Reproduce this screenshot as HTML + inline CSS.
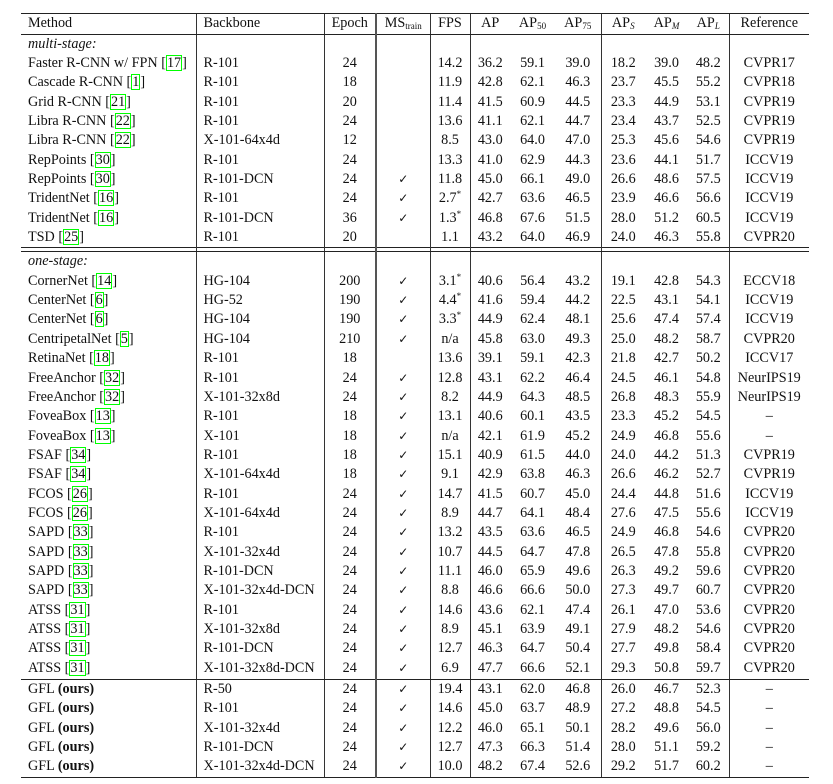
<!DOCTYPE html>
<html><head><meta charset="utf-8"><style>
html,body{margin:0;padding:0;background:#fff;width:833px;height:784px;overflow:hidden}
table{position:absolute;left:21px;top:12.5px;border-collapse:collapse;table-layout:fixed;font-family:"Liberation Serif",serif;font-size:14.2px;color:#111}
td{padding:0;white-space:nowrap;text-align:center;border-left:1px solid #333;line-height:19px;overflow:visible}
td:first-child{border-left:none;text-align:left;padding-left:7px}
td:nth-child(2){text-align:left;padding-left:7px}
td:nth-child(4){border-left:2px solid #555}
td:nth-child(7),td:nth-child(8),td:nth-child(10),td:nth-child(11){border-left:none}
tr.r td{height:19.35px}
tr.h td{height:20px;border-top:1.5px solid #222;border-bottom:1px solid #222}
tr.s td{height:3px;border-top:1px solid #222;border-bottom:1px solid #222}
tr.t td{height:1px;border-bottom:1px solid #222}
tr.last td{border-bottom:1.5px solid #222}
.c{outline:1.5px solid #0f0;outline-offset:-1px;padding:0 1px}
sub{font-size:9px;vertical-align:-2px;line-height:0}
sup{font-size:9px;vertical-align:5px;line-height:0}
b{font-weight:bold}
.k{font-family:"DejaVu Sans",sans-serif;font-size:12px}
</style></head><body>
<table>
<colgroup><col style="width:175px"><col style="width:128px"><col style="width:52px"><col style="width:54px"><col style="width:40px"><col style="width:40px"><col style="width:45px"><col style="width:46px"><col style="width:44px"><col style="width:43px"><col style="width:41px"><col style="width:80px"></colgroup>
<tr class="h"><td>Method</td><td>Backbone</td><td>Epoch</td><td>MS<sub>train</sub></td><td>FPS</td><td>AP</td><td>AP<sub>50</sub></td><td>AP<sub>75</sub></td><td>AP<sub><i>S</i></sub></td><td>AP<sub><i>M</i></sub></td><td>AP<sub><i>L</i></sub></td><td>Reference</td></tr>
<tr class="r"><td><i>multi-stage:</i></td><td></td><td></td><td></td><td></td><td></td><td></td><td></td><td></td><td></td><td></td><td></td></tr>
<tr class="r"><td>Faster R-CNN w/ FPN [<span class="c">17</span>]</td><td>R-101</td><td>24</td><td></td><td>14.2</td><td>36.2</td><td>59.1</td><td>39.0</td><td>18.2</td><td>39.0</td><td>48.2</td><td>CVPR17</td></tr>
<tr class="r"><td>Cascade R-CNN [<span class="c">1</span>]</td><td>R-101</td><td>18</td><td></td><td>11.9</td><td>42.8</td><td>62.1</td><td>46.3</td><td>23.7</td><td>45.5</td><td>55.2</td><td>CVPR18</td></tr>
<tr class="r"><td>Grid R-CNN [<span class="c">21</span>]</td><td>R-101</td><td>20</td><td></td><td>11.4</td><td>41.5</td><td>60.9</td><td>44.5</td><td>23.3</td><td>44.9</td><td>53.1</td><td>CVPR19</td></tr>
<tr class="r"><td>Libra R-CNN [<span class="c">22</span>]</td><td>R-101</td><td>24</td><td></td><td>13.6</td><td>41.1</td><td>62.1</td><td>44.7</td><td>23.4</td><td>43.7</td><td>52.5</td><td>CVPR19</td></tr>
<tr class="r"><td>Libra R-CNN [<span class="c">22</span>]</td><td>X-101-64x4d</td><td>12</td><td></td><td>8.5</td><td>43.0</td><td>64.0</td><td>47.0</td><td>25.3</td><td>45.6</td><td>54.6</td><td>CVPR19</td></tr>
<tr class="r"><td>RepPoints [<span class="c">30</span>]</td><td>R-101</td><td>24</td><td></td><td>13.3</td><td>41.0</td><td>62.9</td><td>44.3</td><td>23.6</td><td>44.1</td><td>51.7</td><td>ICCV19</td></tr>
<tr class="r"><td>RepPoints [<span class="c">30</span>]</td><td>R-101-DCN</td><td>24</td><td class="k">✓</td><td>11.8</td><td>45.0</td><td>66.1</td><td>49.0</td><td>26.6</td><td>48.6</td><td>57.5</td><td>ICCV19</td></tr>
<tr class="r"><td>TridentNet [<span class="c">16</span>]</td><td>R-101</td><td>24</td><td class="k">✓</td><td>2.7<sup>*</sup></td><td>42.7</td><td>63.6</td><td>46.5</td><td>23.9</td><td>46.6</td><td>56.6</td><td>ICCV19</td></tr>
<tr class="r"><td>TridentNet [<span class="c">16</span>]</td><td>R-101-DCN</td><td>36</td><td class="k">✓</td><td>1.3<sup>*</sup></td><td>46.8</td><td>67.6</td><td>51.5</td><td>28.0</td><td>51.2</td><td>60.5</td><td>ICCV19</td></tr>
<tr class="r"><td>TSD [<span class="c">25</span>]</td><td>R-101</td><td>20</td><td></td><td>1.1</td><td>43.2</td><td>64.0</td><td>46.9</td><td>24.0</td><td>46.3</td><td>55.8</td><td>CVPR20</td></tr>
<tr class="s"><td></td><td></td><td></td><td></td><td></td><td></td><td></td><td></td><td></td><td></td><td></td><td></td></tr>
<tr class="r"><td><i>one-stage:</i></td><td></td><td></td><td></td><td></td><td></td><td></td><td></td><td></td><td></td><td></td><td></td></tr>
<tr class="r"><td>CornerNet [<span class="c">14</span>]</td><td>HG-104</td><td>200</td><td class="k">✓</td><td>3.1<sup>*</sup></td><td>40.6</td><td>56.4</td><td>43.2</td><td>19.1</td><td>42.8</td><td>54.3</td><td>ECCV18</td></tr>
<tr class="r"><td>CenterNet [<span class="c">6</span>]</td><td>HG-52</td><td>190</td><td class="k">✓</td><td>4.4<sup>*</sup></td><td>41.6</td><td>59.4</td><td>44.2</td><td>22.5</td><td>43.1</td><td>54.1</td><td>ICCV19</td></tr>
<tr class="r"><td>CenterNet [<span class="c">6</span>]</td><td>HG-104</td><td>190</td><td class="k">✓</td><td>3.3<sup>*</sup></td><td>44.9</td><td>62.4</td><td>48.1</td><td>25.6</td><td>47.4</td><td>57.4</td><td>ICCV19</td></tr>
<tr class="r"><td>CentripetalNet [<span class="c">5</span>]</td><td>HG-104</td><td>210</td><td class="k">✓</td><td>n/a</td><td>45.8</td><td>63.0</td><td>49.3</td><td>25.0</td><td>48.2</td><td>58.7</td><td>CVPR20</td></tr>
<tr class="r"><td>RetinaNet [<span class="c">18</span>]</td><td>R-101</td><td>18</td><td></td><td>13.6</td><td>39.1</td><td>59.1</td><td>42.3</td><td>21.8</td><td>42.7</td><td>50.2</td><td>ICCV17</td></tr>
<tr class="r"><td>FreeAnchor [<span class="c">32</span>]</td><td>R-101</td><td>24</td><td class="k">✓</td><td>12.8</td><td>43.1</td><td>62.2</td><td>46.4</td><td>24.5</td><td>46.1</td><td>54.8</td><td>NeurIPS19</td></tr>
<tr class="r"><td>FreeAnchor [<span class="c">32</span>]</td><td>X-101-32x8d</td><td>24</td><td class="k">✓</td><td>8.2</td><td>44.9</td><td>64.3</td><td>48.5</td><td>26.8</td><td>48.3</td><td>55.9</td><td>NeurIPS19</td></tr>
<tr class="r"><td>FoveaBox [<span class="c">13</span>]</td><td>R-101</td><td>18</td><td class="k">✓</td><td>13.1</td><td>40.6</td><td>60.1</td><td>43.5</td><td>23.3</td><td>45.2</td><td>54.5</td><td>–</td></tr>
<tr class="r"><td>FoveaBox [<span class="c">13</span>]</td><td>X-101</td><td>18</td><td class="k">✓</td><td>n/a</td><td>42.1</td><td>61.9</td><td>45.2</td><td>24.9</td><td>46.8</td><td>55.6</td><td>–</td></tr>
<tr class="r"><td>FSAF [<span class="c">34</span>]</td><td>R-101</td><td>18</td><td class="k">✓</td><td>15.1</td><td>40.9</td><td>61.5</td><td>44.0</td><td>24.0</td><td>44.2</td><td>51.3</td><td>CVPR19</td></tr>
<tr class="r"><td>FSAF [<span class="c">34</span>]</td><td>X-101-64x4d</td><td>18</td><td class="k">✓</td><td>9.1</td><td>42.9</td><td>63.8</td><td>46.3</td><td>26.6</td><td>46.2</td><td>52.7</td><td>CVPR19</td></tr>
<tr class="r"><td>FCOS [<span class="c">26</span>]</td><td>R-101</td><td>24</td><td class="k">✓</td><td>14.7</td><td>41.5</td><td>60.7</td><td>45.0</td><td>24.4</td><td>44.8</td><td>51.6</td><td>ICCV19</td></tr>
<tr class="r"><td>FCOS [<span class="c">26</span>]</td><td>X-101-64x4d</td><td>24</td><td class="k">✓</td><td>8.9</td><td>44.7</td><td>64.1</td><td>48.4</td><td>27.6</td><td>47.5</td><td>55.6</td><td>ICCV19</td></tr>
<tr class="r"><td>SAPD [<span class="c">33</span>]</td><td>R-101</td><td>24</td><td class="k">✓</td><td>13.2</td><td>43.5</td><td>63.6</td><td>46.5</td><td>24.9</td><td>46.8</td><td>54.6</td><td>CVPR20</td></tr>
<tr class="r"><td>SAPD [<span class="c">33</span>]</td><td>X-101-32x4d</td><td>24</td><td class="k">✓</td><td>10.7</td><td>44.5</td><td>64.7</td><td>47.8</td><td>26.5</td><td>47.8</td><td>55.8</td><td>CVPR20</td></tr>
<tr class="r"><td>SAPD [<span class="c">33</span>]</td><td>R-101-DCN</td><td>24</td><td class="k">✓</td><td>11.1</td><td>46.0</td><td>65.9</td><td>49.6</td><td>26.3</td><td>49.2</td><td>59.6</td><td>CVPR20</td></tr>
<tr class="r"><td>SAPD [<span class="c">33</span>]</td><td>X-101-32x4d-DCN</td><td>24</td><td class="k">✓</td><td>8.8</td><td>46.6</td><td>66.6</td><td>50.0</td><td>27.3</td><td>49.7</td><td>60.7</td><td>CVPR20</td></tr>
<tr class="r"><td>ATSS [<span class="c">31</span>]</td><td>R-101</td><td>24</td><td class="k">✓</td><td>14.6</td><td>43.6</td><td>62.1</td><td>47.4</td><td>26.1</td><td>47.0</td><td>53.6</td><td>CVPR20</td></tr>
<tr class="r"><td>ATSS [<span class="c">31</span>]</td><td>X-101-32x8d</td><td>24</td><td class="k">✓</td><td>8.9</td><td>45.1</td><td>63.9</td><td>49.1</td><td>27.9</td><td>48.2</td><td>54.6</td><td>CVPR20</td></tr>
<tr class="r"><td>ATSS [<span class="c">31</span>]</td><td>R-101-DCN</td><td>24</td><td class="k">✓</td><td>12.7</td><td>46.3</td><td>64.7</td><td>50.4</td><td>27.7</td><td>49.8</td><td>58.4</td><td>CVPR20</td></tr>
<tr class="r"><td>ATSS [<span class="c">31</span>]</td><td>X-101-32x8d-DCN</td><td>24</td><td class="k">✓</td><td>6.9</td><td>47.7</td><td>66.6</td><td>52.1</td><td>29.3</td><td>50.8</td><td>59.7</td><td>CVPR20</td></tr>
<tr class="t"><td></td><td></td><td></td><td></td><td></td><td></td><td></td><td></td><td></td><td></td><td></td><td></td></tr>
<tr class="r"><td>GFL <b>(ours)</b></td><td>R-50</td><td>24</td><td class="k">✓</td><td>19.4</td><td>43.1</td><td>62.0</td><td>46.8</td><td>26.0</td><td>46.7</td><td>52.3</td><td>–</td></tr>
<tr class="r"><td>GFL <b>(ours)</b></td><td>R-101</td><td>24</td><td class="k">✓</td><td>14.6</td><td>45.0</td><td>63.7</td><td>48.9</td><td>27.2</td><td>48.8</td><td>54.5</td><td>–</td></tr>
<tr class="r"><td>GFL <b>(ours)</b></td><td>X-101-32x4d</td><td>24</td><td class="k">✓</td><td>12.2</td><td>46.0</td><td>65.1</td><td>50.1</td><td>28.2</td><td>49.6</td><td>56.0</td><td>–</td></tr>
<tr class="r"><td>GFL <b>(ours)</b></td><td>R-101-DCN</td><td>24</td><td class="k">✓</td><td>12.7</td><td>47.3</td><td>66.3</td><td>51.4</td><td>28.0</td><td>51.1</td><td>59.2</td><td>–</td></tr>
<tr class="r last"><td>GFL <b>(ours)</b></td><td>X-101-32x4d-DCN</td><td>24</td><td class="k">✓</td><td>10.0</td><td>48.2</td><td>67.4</td><td>52.6</td><td>29.2</td><td>51.7</td><td>60.2</td><td>–</td></tr>
</table>
</body></html>
